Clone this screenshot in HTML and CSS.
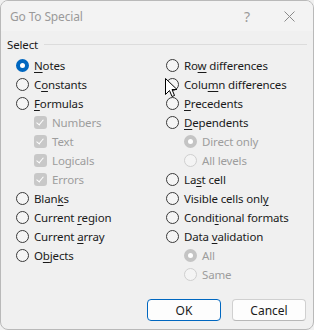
FILE: index.html
```html
<!DOCTYPE html>
<html lang="en">
<head>
    <meta charset="UTF-8">
    <title>Go To Special</title>
    <link rel="stylesheet" href="styles.css">
</head>
<body>
    <div class="window">
        <div class="titlebar">
            <span class="title">Go To Special</span>
            <span class="help">?</span>
            <svg class="close" width="11" height="11" viewBox="0 0 11 11">
                <path d="M0.5 0.5 L10.5 10.5 M10.5 0.5 L0.5 10.5" stroke="#8a8a8a" stroke-width="1" fill="none"/>
            </svg>
        </div>

        <div class="content">
            <div class="group-label">
                <span>Select</span>
                <span class="rule"></span>
            </div>

            <div class="columns">
                <div class="col">
                    <div class="row"><span class="radio checked"></span><span><u>N</u>otes</span></div>
                    <div class="row"><span class="radio"></span><span>C<u>o</u>nstants</span></div>
                    <div class="row"><span class="radio"></span><span><u>F</u>ormulas</span></div>
                    <div class="row sub disabled"><span class="check"></span><span>Numbers</span></div>
                    <div class="row sub disabled"><span class="check"></span><span>Text</span></div>
                    <div class="row sub disabled"><span class="check"></span><span>Logicals</span></div>
                    <div class="row sub disabled"><span class="check"></span><span>Errors</span></div>
                    <div class="row"><span class="radio"></span><span>Blan<u>k</u>s</span></div>
                    <div class="row"><span class="radio"></span><span>Current <u>r</u>egion</span></div>
                    <div class="row"><span class="radio"></span><span>Current <u>a</u>rray</span></div>
                    <div class="row"><span class="radio"></span><span>O<u>b</u>jects</span></div>
                </div>
                <div class="col">
                    <div class="row"><span class="radio"></span><span>Ro<u>w</u> differences</span></div>
                    <div class="row"><span class="radio"></span><span>Colu<u>m</u>n differences</span></div>
                    <div class="row"><span class="radio"></span><span><u>P</u>recedents</span></div>
                    <div class="row"><span class="radio"></span><span><u>D</u>ependents</span></div>
                    <div class="row sub disabled"><span class="radio checked"></span><span>Direct only</span></div>
                    <div class="row sub disabled"><span class="radio"></span><span>All levels</span></div>
                    <div class="row"><span class="radio"></span><span>La<u>s</u>t cell</span></div>
                    <div class="row"><span class="radio"></span><span>Visible cells onl<u>y</u></span></div>
                    <div class="row"><span class="radio"></span><span>Condi<u>t</u>ional formats</span></div>
                    <div class="row"><span class="radio"></span><span>Data <u>v</u>alidation</span></div>
                    <div class="row sub disabled"><span class="radio checked"></span><span>All</span></div>
                    <div class="row sub disabled"><span class="radio"></span><span>Same</span></div>
                </div>
            </div>

            <div class="buttons">
                <button class="btn primary">OK</button>
                <button class="btn">Cancel</button>
            </div>
        </div>

        <svg class="cursor" width="13" height="20" viewBox="0 0 13 20">
            <path d="M0.5 0.5 L0.5 16.5 L4.5 12.5 L7 18.5 L9.5 17.5 L7 11.5 L12 11.5 Z" fill="#fff" stroke="#000" stroke-width="1" stroke-linejoin="miter"/>
        </svg>
    </div>
</body>
</html>
```

FILE: styles.css
```css
html, body {
    margin: 0;
    padding: 0;
}
body {
    font-family: "Noto Sans", "Open Sans", sans-serif;
    font-size: 11.5px;
    letter-spacing: -0.15px;
    color: #1a1a1a;
    background-color: #f0f0f0;
}
.window {
    position: relative;
    box-sizing: border-box;
    width: 314px;
    height: 330px;
    border: 1px solid #b9b9b9;
    border-radius: 8px;
    background-color: #f0f0f0;
    overflow: hidden;
}
.titlebar {
    height: 30px;
    display: flex;
    align-items: center;
    background-color: #f3f3f3;
    padding-left: 9px;
}
.title {
    color: #9a9a9a;
    font-size: 12px;
    flex: 1;
}
.help {
    color: #9a9a9a;
    font-size: 14px;
    margin-right: 34px;
}
.close {
    margin-right: 18px;
}
.content {
    padding: 4px 6px 0 6px;
}
.group-label {
    display: flex;
    align-items: center;
    height: 18px;
}
.group-label .rule {
    flex: 1;
    height: 1px;
    background-color: #dcdcdc;
    margin-left: 6px;
}
.columns {
    display: flex;
    padding-left: 9px;
    margin-top: 3px;
}
.col {
    display: flex;
    flex-direction: column;
}
.col:first-child {
    width: 150px;
}
.row {
    display: flex;
    align-items: center;
    height: 19px;
    white-space: nowrap;
}
.row.sub {
    padding-left: 18px;
}
.row.disabled {
    color: #9d9d9d;
}
u {
    text-decoration-thickness: 1px;
    text-underline-offset: 2px;
}
.radio {
    box-sizing: border-box;
    width: 13px;
    height: 13px;
    border: 1px solid #3a3a3a;
    border-radius: 50%;
    margin-right: 5px;
    background-color: #f5f5f5;
    flex: none;
}
.radio.checked {
    border: 4px solid #0067c0;
    background-color: #fff;
}
.disabled .radio {
    border-color: #cfcfcf;
    background-color: #f4f4f4;
}
.disabled .radio.checked {
    border: 4px solid #c4c4c4;
    background-color: #fff;
}
.check {
    position: relative;
    box-sizing: border-box;
    width: 13px;
    height: 13px;
    border-radius: 3px;
    background-color: #c8c8c8;
    margin-right: 5px;
    flex: none;
}
.check:after {
    content: "";
    position: absolute;
    left: 4px;
    top: 2px;
    width: 3px;
    height: 6px;
    border-right: 1px solid #fff;
    border-bottom: 1px solid #fff;
    transform: rotate(40deg);
}
.buttons {
    display: flex;
    justify-content: flex-end;
    gap: 11px;
    margin-top: 15px;
    padding-right: 1px;
}
.btn {
    box-sizing: border-box;
    width: 74px;
    height: 22px;
    font-family: inherit;
    font-size: 12px;
    color: #1a1a1a;
    background-color: #fdfdfd;
    border: 1px solid #d0d0d0;
    border-bottom-color: #b8b8b8;
    border-radius: 4px;
    padding: 0;
}
.btn.primary {
    border: 1px solid #0067c0;
}
.cursor {
    position: absolute;
    left: 164px;
    top: 77px;
}
```
